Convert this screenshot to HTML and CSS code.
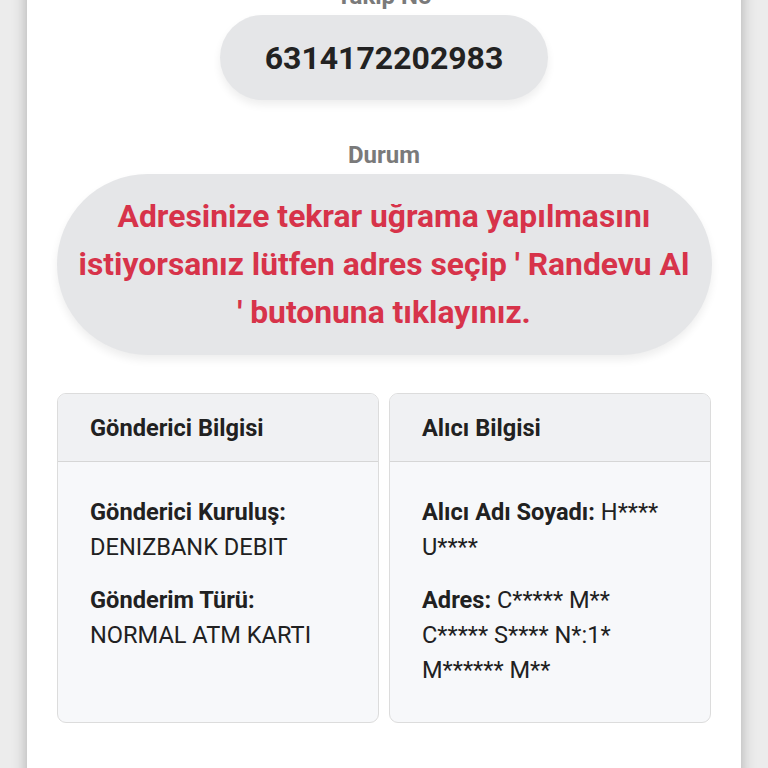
FILE: index.html
```html
<!DOCTYPE html>
<html lang="tr">
<head>
<meta charset="utf-8">
<title>Gönderi Takip</title>
<link rel="stylesheet" href="styles.css">
</head>
<body>
<main class="page">
  <section class="track">
    <div class="label">Takip No</div>
    <div class="pill number-pill">6314172202983</div>
    <div class="label status-label">Durum</div>
    <div class="pill status-pill">Adresinize tekrar uğrama yapılmasını istiyorsanız lütfen adres seçip ' Randevu Al ' butonuna tıklayınız.</div>
  </section>
  <section class="cards">
    <div class="card">
      <div class="card-header">Gönderici Bilgisi</div>
      <div class="card-body">
        <div class="field">
          <div class="key">Gönderici Kuruluş:</div>
          <div>DENIZBANK DEBIT</div>
        </div>
        <div class="field">
          <div class="key">Gönderim Türü:</div>
          <div>NORMAL ATM KARTI</div>
        </div>
      </div>
    </div>
    <div class="card">
      <div class="card-header">Alıcı Bilgisi</div>
      <div class="card-body">
        <div class="field"><span class="key">Alıcı Adı Soyadı:</span> H**** U****</div>
        <div class="field"><span class="key">Adres:</span> C***** M** C***** S**** N*:1* M****** M**</div>
      </div>
    </div>
  </section>
</main>
</body>
</html>
```

FILE: styles.css
```css
html, body {
  margin: 0;
  padding: 0;
}
body {
  background: #ececec;
  font-family: Roboto, "Liberation Sans", Arial, sans-serif;
  color: #212121;
  overflow: hidden;
}
.page {
  margin-left: 27px;
  width: 714px;
  min-height: 900px;
  background: #ffffff;
  box-shadow: 0 0 14px rgba(0, 0, 0, 0.28);
  padding: 0 30px;
  box-sizing: border-box;
}
.track {
  display: flex;
  flex-direction: column;
  align-items: center;
  margin-top: -17px;
}
.label {
  font-size: 24px;
  line-height: 26px;
  font-weight: 700;
  color: #7a7a7a;
  margin-bottom: 6px;
}
.status-label {
  margin-top: 42px;
}
.pill {
  background: #e5e6e8;
  border-radius: 999px;
  box-shadow: 0 5px 9px rgba(0, 0, 0, 0.07);
  text-align: center;
  font-weight: 700;
}
.number-pill {
  height: 85px;
  box-sizing: border-box;
  padding: 0 45px;
  display: flex;
  align-items: center;
  font-size: 32px;
  color: #222222;
}
.status-pill {
  width: 655px;
  box-sizing: border-box;
  padding: 18px 17px 19px;
  font-size: 31.8px;
  line-height: 48px;
  color: #d7334a;
}
.cards {
  display: grid;
  grid-template-columns: 1fr 1fr;
  gap: 10px;
  margin-top: 38px;
}
.card {
  height: 330px;
  box-sizing: border-box;
  border: 1px solid #dcdcdc;
  border-radius: 9px;
  background: #f7f8fa;
  overflow: hidden;
  display: flex;
  flex-direction: column;
}
.card-header {
  height: 68px;
  box-sizing: border-box;
  display: flex;
  align-items: center;
  padding: 0 32px;
  background: #f0f1f3;
  border-bottom: 1px solid #d6d6d6;
  font-size: 23.6px;
  font-weight: 700;
}
.card-body {
  padding: 33px 32px 0;
  font-size: 23.6px;
  line-height: 35px;
  display: flex;
  flex-direction: column;
  gap: 18px;
}
.key {
  font-weight: 700;
}
```
